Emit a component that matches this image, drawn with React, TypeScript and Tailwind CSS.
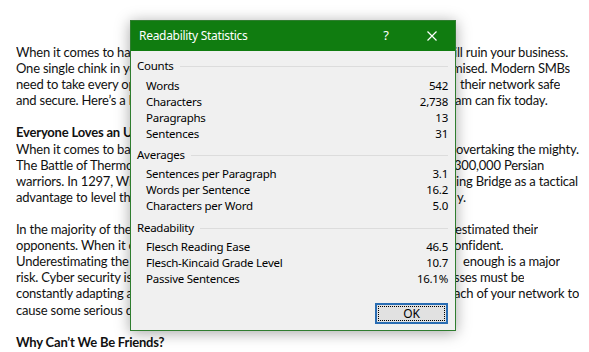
const LINES: { left: string; right?: string; shift?: string; bold?: boolean; gap?: boolean }[] = [
  { left: 'When it comes to hackers, one weak link can and', right: 'will ruin your business.', shift: '-ml-[12px]' },
  { left: 'One single chink in your armour and your data is compro', right: 'mised. Modern SMBs', shift: '-ml-[4px]' },
  { left: 'need to take every opportunity they can to keep', right: 'their network safe', shift: 'ml-[4px]' },
  { left: 'and secure. Here’s a look at what our team', right: 'am can fix today.', shift: '-ml-[1px]' },
  { left: '', gap: true },
  { left: 'Everyone Loves an Underdog', bold: true },
  { left: 'When it comes to battles, history is full of the weak', right: 'overtaking the mighty.', shift: 'ml-0' },
  { left: 'The Battle of Thermopylae saw 300 Spartans hold off', right: '300,000 Persian', shift: '-ml-[2px]' },
  { left: 'warriors. In 1297, William Wallace used Stirl', right: 'ing Bridge as a tactical', shift: 'ml-0' },
  { left: 'advantage to level the playing field. Here’s wh', right: 'y.', shift: 'ml-[1px]' },
  { left: '', gap: true },
  { left: 'In the majority of these cases, the mighty under', right: 'estimated their', shift: '-ml-[1px]' },
  { left: 'opponents. When it comes to battle, they were overc', right: 'onfident.', shift: '-ml-[2px]' },
  { left: 'Underestimating the threat or not preparing', right: 'enough is a major', shift: 'ml-[7px]' },
  { left: 'risk. Cyber security is no different. Busine', right: 'sses must be', shift: '-ml-[2px]' },
  { left: 'constantly adapting and stopping threats from re', right: 'ach of your network to', shift: '-ml-[2px]' },
  { left: 'cause some serious damage.' },
  { left: '', gap: true },
  { left: 'Why Can’t We Be Friends?', bold: true },
];

const SECTIONS: { title: string; top: string; itemTop: string; rows: [string, string][] }[] = [
  {
    title: 'Counts',
    top: 'mt-[7px]',
    itemTop: 'mt-[4px]',
    rows: [
      ['Words', '542'],
      ['Characters', '2,738'],
      ['Paragraphs', '13'],
      ['Sentences', '31'],
    ],
  },
  {
    title: 'Averages',
    top: 'mt-[5px]',
    itemTop: 'mt-[3px]',
    rows: [
      ['Sentences per Paragraph', '3.1'],
      ['Words per Sentence', '16.2'],
      ['Characters per Word', '5.0'],
    ],
  },
  {
    title: 'Readability',
    top: 'mt-[6px]',
    itemTop: 'mt-[3px]',
    rows: [
      ['Flesch Reading Ease', '46.5'],
      ['Flesch-Kincaid Grade Level', '10.7'],
      ['Passive Sentences', '16.1%'],
    ],
  },
];

function ReadabilityDialog() {
  return (
    <div className="absolute left-[130px] top-[20px] z-10 flex h-[311px] w-[326px] flex-col border border-[#2f7d2f] bg-[#f0f0f0] shadow-[0_2px_14px_rgba(0,0,0,0.35)] font-['Noto_Sans',sans-serif] text-[11.5px] tracking-[-0.25px] text-black">
      {/* Title bar */}
      <div className="flex h-[30px] shrink-0 items-center bg-[#107c10] pl-[8px] text-[12px] tracking-[-0.3px] text-white">
        <span className="flex-1">Readability Statistics</span>
        <span className="mr-[36px] w-[10px] text-center text-[13px]">?</span>
        <svg width="10" height="10" viewBox="0 0 10 10" className="mr-[18px]">
          <path d="M0.5 0.5 L9.5 9.5 M9.5 0.5 L0.5 9.5" stroke="white" strokeWidth="1.2" />
        </svg>
      </div>

      {/* Body */}
      <div className="flex flex-1 flex-col pl-[6px] pr-[7px]">
        {SECTIONS.map((s) => (
          <div key={s.title} className={s.top}>
            <div className="flex h-[16px] items-center">
              <span className="leading-[16px]">{s.title}</span>
              <div className="ml-[6px] h-px flex-1 bg-[#dcdcdc]" />
            </div>
            <div className={s.itemTop}>
              {s.rows.map(([label, value]) => (
                <div key={label} className="flex h-[16px] items-center justify-between pl-[9px] leading-[16px]">
                  <span>{label}</span>
                  <span>{value}</span>
                </div>
              ))}
            </div>
          </div>
        ))}

        <div className="mt-[16px] flex justify-end">
          <button className="h-[21px] w-[73px] border-2 border-[#2a6db3] bg-[#e1e1e1] p-[1px]">
            <div className="flex h-full w-full items-center justify-center border border-dotted border-black text-[12px] leading-none">
              OK
            </div>
          </button>
        </div>
      </div>
    </div>
  );
}

export default function App() {
  return (
    <div className="relative h-[352px] w-[589px] overflow-hidden bg-white">
      <div className="pl-[16px] pt-[44px] font-['Lato',sans-serif] text-[13px] tracking-[-0.2px] leading-[16.1px] text-[#111]">
        {LINES.map((line, i) => {
          if (line.gap) return <div key={i} className="h-[16.1px]" />;
          if (!line.right)
            return (
              <div key={i} className={`h-[16.1px] whitespace-nowrap ${line.bold ? 'font-bold' : ''}`}>
                {line.left}
              </div>
            );
          return (
            <div key={i} className="flex h-[16.1px] whitespace-nowrap">
              <span className="w-[114px] shrink-0 overflow-hidden">{line.left}</span>
              <span className="ml-[326px] flex overflow-hidden">
                <span className={line.shift}>{line.right}</span>
              </span>
            </div>
          );
        })}
      </div>
      <ReadabilityDialog />
    </div>
  );
}
